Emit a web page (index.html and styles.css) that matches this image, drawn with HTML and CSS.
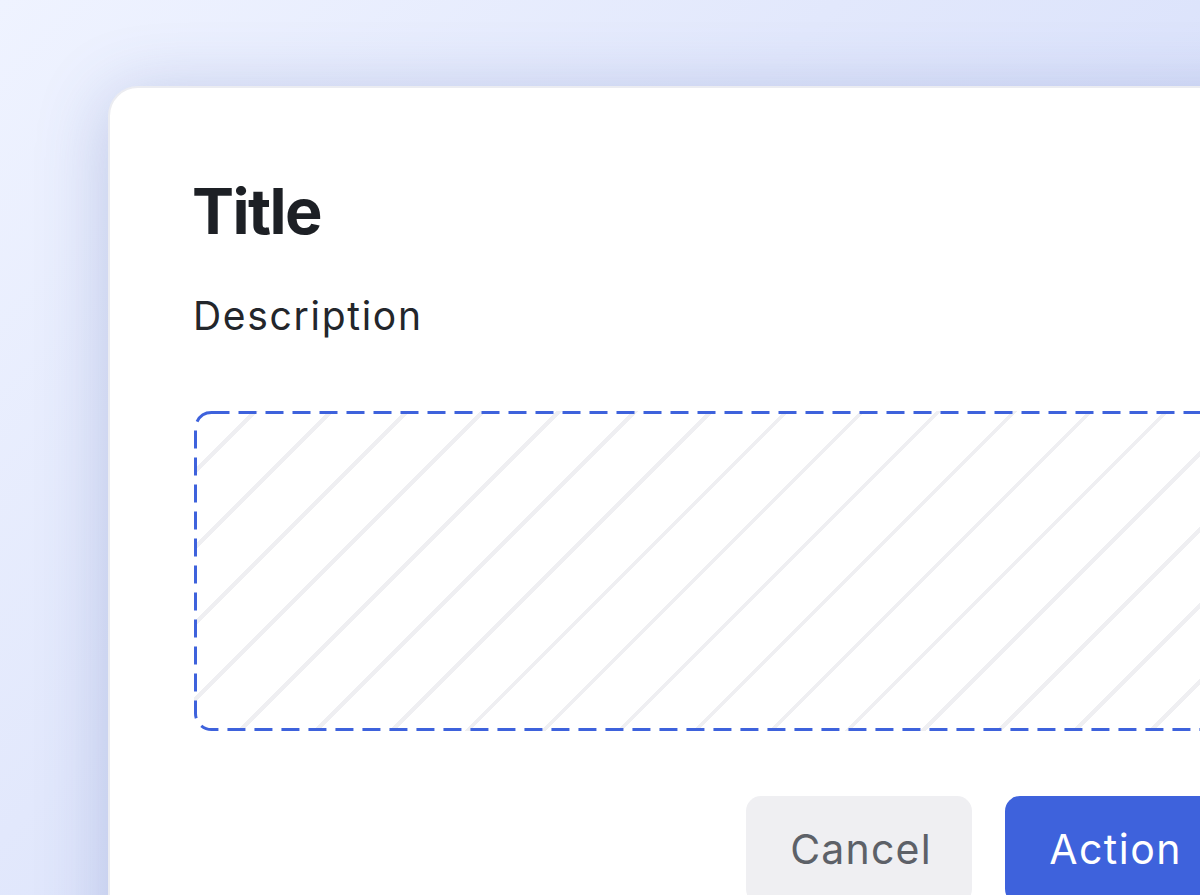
FILE: index.html
```html
<!DOCTYPE html>
<html>
<head>
<meta charset="utf-8">
<link rel="stylesheet" href="styles.css">
</head>
<body>
<div class="stage">
  <div class="card">
    <h1 class="title">Title</h1>
    <p class="desc">Description</p>
    <div class="slot">
      <svg class="slot-border" width="100%" height="100%" preserveAspectRatio="none">
        <rect x="1.5" y="1.5" width="calc(100% - 3px)" height="calc(100% - 3px)" rx="16" ry="16" fill="none" stroke="#3e62dc" stroke-width="3" stroke-dasharray="18 9"/>
      </svg>
    </div>
    <div class="actions">
      <button class="btn btn-cancel">Cancel</button>
      <button class="btn btn-primary">Action</button>
    </div>
  </div>
</div>
</body>
</html>
```
FILE: styles.css
```css
html, body {
  margin: 0;
  padding: 0;
  width: 1200px;
  height: 895px;
  overflow: hidden;
}
body {
  font-family: Inter, "Noto Sans", sans-serif;
  background: linear-gradient(135deg, #eff3ff 0%, #e2e8fc 40%, #d8e0fb 75%, #d2daf6 100%);
}
.stage {
  padding: 86px 0 0 108px;
}
.card {
  width: 1204px;
  height: 900px;
  box-sizing: border-box;
  background: #ffffff;
  border: 2px solid #ebecf1;
  border-radius: 30px;
  padding: 86px 84px 0 84px;
  box-shadow: 0 10px 70px rgba(70, 90, 170, 0.28);
  display: flex;
  flex-direction: column;
}
.title {
  margin: 0 0 0 -2px;
  font-size: 63px;
  line-height: 1.2;
  font-weight: 700;
  color: #1d2025;
  letter-spacing: -1.6px;
}
.desc {
  margin: 43px 0 0 -1px;
  font-size: 39px;
  line-height: 1.2;
  font-weight: 400;
  color: #23262b;
  letter-spacing: 1.7px;
}
.slot {
  position: relative;
  margin-top: 72px;
  height: 320px;
  border-radius: 17px;
  background: repeating-linear-gradient(135deg, transparent 0px, transparent 41.5px, #efeff2 41.5px, #efeff2 45.5px, transparent 45.5px, transparent 53.7px);
}
.slot-border {
  position: absolute;
  inset: 0;
  width: 100%;
  height: 100%;
}
.actions {
  margin-top: 65px;
  display: flex;
  justify-content: flex-end;
  gap: 33px;
}
.btn {
  font-family: Inter, "Noto Sans", sans-serif;
  font-size: 41px;
  line-height: 1.2;
  padding: 29px 44px;
  border: none;
  border-radius: 15px;
}
.btn-cancel {
  background: #efeff2;
  color: #5d6168;
  width: 226px;
  letter-spacing: 1.2px;
}
.btn-primary {
  background: #3e62dc;
  color: #ffffff;
  letter-spacing: 1.5px;
}
```
